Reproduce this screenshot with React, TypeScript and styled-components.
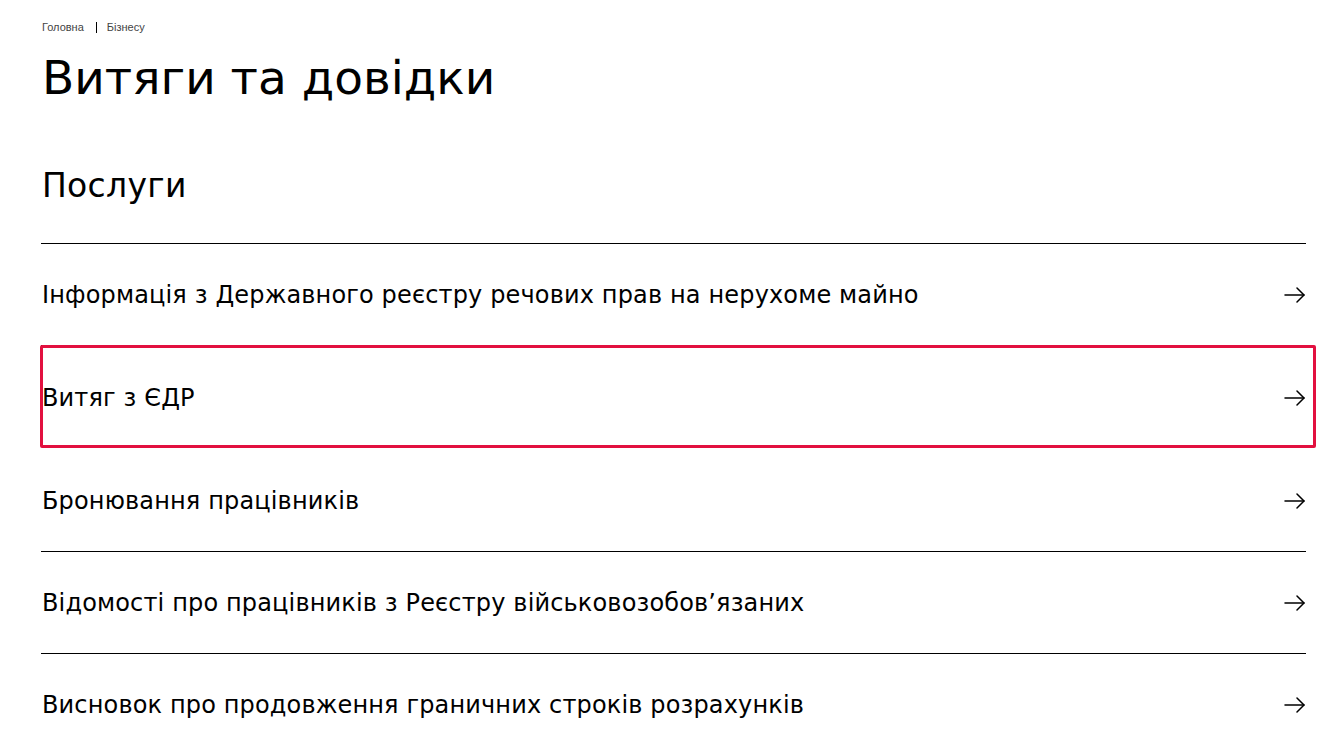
import * as React from 'react';
import styled, { createGlobalStyle } from 'styled-components';

const GlobalStyle = createGlobalStyle`
  html, body {
    margin: 0;
    padding: 0;
    background: #fff;
  }
  body {
    font-family: 'DejaVu Sans', 'Liberation Sans', sans-serif;
    color: #000;
  }
`;

const Page = styled.main`
  padding: 19px 37px 0 41px;
`;

const Crumbs = styled.nav`
  display: flex;
  align-items: center;
  gap: 10px;
  padding-left: 1px;
  font-family: 'Liberation Sans', Arial, sans-serif;
  font-size: 11px;
  line-height: 16px;
  color: #444;
`;

const Crumb = styled.a`
  color: inherit;
  text-decoration: none;
`;

const Divider = styled.span`
  width: 1px;
  height: 11px;
  margin: 0 0 0 2px;
  background: #000;
`;

const Title = styled.h1`
  margin: 13px 0 0 1px;
  font-size: 47px;
  font-weight: 400;
  line-height: 60px;
`;

const Section = styled.h2`
  margin: 58px 0 0 1px;
  font-size: 33px;
  font-weight: 400;
  line-height: 40px;
  letter-spacing: 0.3px;
`;

const List = styled.ul`
  list-style: none;
  margin: 37px 0 0;
  padding: 0;
  border-top: 1px solid #000;
`;

const Row = styled.li<{ $focused?: boolean }>`
  position: relative;
  display: flex;
  align-items: center;
  justify-content: space-between;
  height: ${p => (p.$focused ? 104 : 101)}px;
  padding-left: 1px;
  border-bottom: 1px solid ${p => (p.$focused ? 'transparent' : '#000')};
  box-sizing: ${p => (p.$focused ? 'border-box' : 'content-box')};
  font-size: 24px;
  letter-spacing: 0.15px;
  cursor: pointer;

  ${p =>
    p.$focused &&
    `
    &::after {
      content: '';
      position: absolute;
      top: -1px;
      bottom: 1px;
      left: -1px;
      right: -10px;
      border: 3px solid #e2103f;
      border-radius: 2px;
      pointer-events: none;
    }
  `}
`;

const Arrow = styled.svg`
  flex: none;
  width: 22px;
  height: 16px;
`;

const ArrowIcon = () => (
  <Arrow viewBox="0 0 22 16" fill="none" stroke="#000" strokeWidth="1.5" strokeLinecap="round" strokeLinejoin="round">
    <path d="M1 8h19" />
    <path d="M13 1l7 7-7 7" />
  </Arrow>
);

const services = [
  'Інформація з Державного реєстру речових прав на нерухоме майно',
  'Витяг з ЄДР',
  'Бронювання працівників',
  'Відомості про працівників з Реєстру військовозобов’язаних',
  'Висновок про продовження граничних строків розрахунків',
];

const App = () => (
  <>
    <GlobalStyle />
    <Page>
      <Crumbs>
        <Crumb href="#">Головна</Crumb>
        <Divider />
        <Crumb href="#">Бізнесу</Crumb>
      </Crumbs>
      <Title>Витяги та довідки</Title>
      <Section>Послуги</Section>
      <List>
        {services.map((name, i) => (
          <Row key={name} $focused={i === 1}>
            <span>{name}</span>
            <ArrowIcon />
          </Row>
        ))}
      </List>
    </Page>
  </>
);

export default App;
